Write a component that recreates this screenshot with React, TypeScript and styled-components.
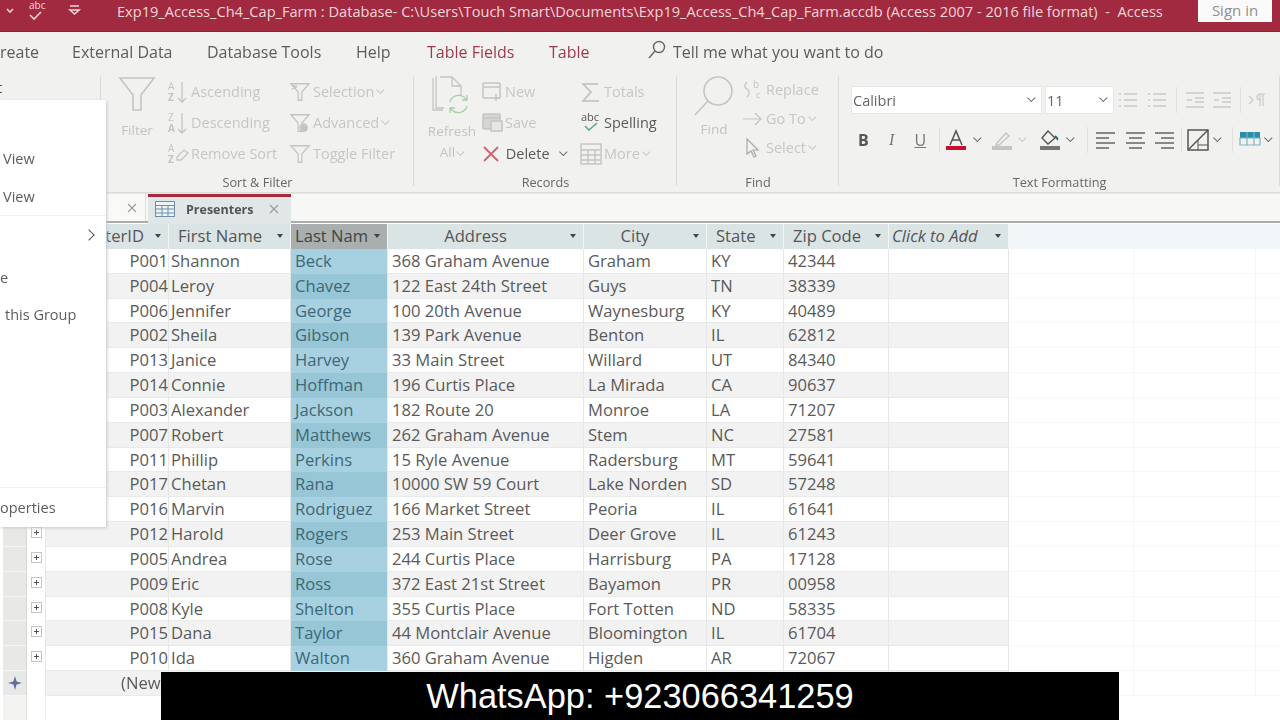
import React from "react";
import styled, { createGlobalStyle } from "styled-components";

const Global = createGlobalStyle`
  html, body { margin: 0; padding: 0; background: #fff; overflow: hidden; }
  #root { width: 1280px; height: 720px; }
`;

const Page = styled.div`
  position: relative;
  width: 1280px;
  height: 720px;
  overflow: hidden;
  display: flex;
  flex-direction: column;
  font-family: "Open Sans", "Noto Sans", sans-serif;
  color: #555;
`;
const Soft = styled.div`
  display: flex;
  flex-direction: column;
  flex: 1;
  min-height: 0;
  filter: blur(0.45px);
`;

/* ---------- title bar ---------- */
const TitleBar = styled.header`
  height: 31px;
  background: #a12a40;
  border-bottom: 1px solid #8b2236;
  display: flex;
  align-items: flex-start;
  flex: none;
`;
const Qat = styled.div`
  width: 117px;
  height: 22px;
  flex: none;
  display: flex;
  align-items: center;
  padding-left: 5px;
  box-sizing: border-box;
`;
const Title = styled.div`
  flex: 1;
  font-size: 14.6px;
  line-height: 23px;
  color: #f0d6d9;
  white-space: pre;
  overflow: hidden;
`;
const SignIn = styled.div`
  width: 74px;
  height: 22px;
  margin-right: 8px;
  background: #fbfafa;
  color: #8f8f91;
  font-size: 15px;
  line-height: 21px;
  text-align: center;
  flex: none;
`;

/* ---------- ribbon tabs ---------- */
const TabRow = styled.nav`
  height: 40px;
  background: #f1f2ef;
  flex: none;
  position: relative;
  display: flex;
  align-items: center;
  font-size: 16px;
  color: #5c5c5c;
  overflow: hidden;
`;
const TabLabel = styled.span<{ $w: number; $red?: boolean }>`
  width: ${(p) => p.$w}px;
  flex: none;
  white-space: nowrap;
  color: ${(p) => (p.$red ? "#9c3a4c" : "inherit")};
`;
const CutTab = styled.span`
  width: 72px;
  flex: none;
  white-space: nowrap;
`;

/* ---------- ribbon ---------- */
const Ribbon = styled.section`
  height: 120px;
  flex: none;
  background: #f1f2ef;
  border-bottom: 1px solid #dcdcda;
  box-shadow: 0 1px 2px #d9d9d7;
  display: flex;
  box-sizing: content-box;
`;
const Group = styled.div<{ $w: number }>`
  width: ${(p) => p.$w}px;
  flex: none;
  box-sizing: border-box;
  position: relative;
  display: flex;
  flex-direction: column;
  &::after {
    content: "";
    position: absolute;
    right: 0;
    top: 4px;
    bottom: 6px;
    width: 1px;
    background: #dbdbd9;
  }
`;
const GroupBody = styled.div<{ $pad: number }>`
  flex: 1;
  display: flex;
  padding: 3px 0 0 ${(p) => p.$pad}px;
  min-height: 0;
`;
const GroupLabel = styled.div`
  height: 19px;
  line-height: 18px;
  font-size: 12.7px;
  color: #666;
  text-align: center;
  flex: none;
`;
const BigCol = styled.div<{ $w: number; $labelGap?: number }>`
  width: ${(p) => p.$w}px;
  flex: none;
  display: flex;
  flex-direction: column;
  align-items: center;
  font-size: 13.5px;
  line-height: 21px;
  color: #c3c4c2;
  svg {
    margin-bottom: ${(p) => p.$labelGap ?? 0}px;
    flex: none;
  }
`;
const SmallCol = styled.div<{ $w: number; $row?: number; $top?: number; $left?: number }>`
  width: ${(p) => p.$w}px;
  flex: none;
  display: flex;
  flex-direction: column;
  box-sizing: border-box;
  padding-top: ${(p) => p.$top ?? 0}px;
  padding-left: ${(p) => p.$left ?? 0}px;
  & > * {
    height: ${(p) => p.$row ?? 31}px;
    flex: none;
  }
`;
const Cmd = styled.div<{ $on?: boolean }>`
  display: flex;
  align-items: center;
  gap: 1px;
  font-size: 14.5px;
  white-space: nowrap;
  color: ${(p) => (p.$on ? "#5a5a5a" : "#c6c7c5")};
  svg {
    flex: none;
    margin-right: 1px;
  }
`;
const Leftover = styled.div`
  font-size: 15px;
  color: #555;
  padding: 2px 0 0 0;
  margin-left: -3px;
`;
const Down = styled.span<{ $on?: boolean }>`
  display: inline-block;
  flex: none;
  margin-left: 3px;
  width: 5px;
  height: 5px;
  border-right: 1.3px solid ${(p) => (p.$on ? "#666" : "#c6c7c5")};
  border-bottom: 1.3px solid ${(p) => (p.$on ? "#666" : "#c6c7c5")};
  transform: rotate(45deg) translate(-2px, -1px);
`;

/* text formatting */
const FormatBody = styled.div`
  flex: 1;
  display: flex;
  flex-direction: column;
  padding: 14px 0 0 12px;
  gap: 12px;
  min-height: 0;
`;
const FormatRow = styled.div<{ $left?: number }>`
  display: flex;
  align-items: center;
  height: 28px;
  margin-left: ${(p) => p.$left ?? 0}px;
`;
const Select = styled.div<{ $w: number }>`
  width: ${(p) => p.$w}px;
  height: 28px;
  background: #fff;
  border: 1px solid #e7e7e5;
  box-sizing: border-box;
  display: flex;
  align-items: center;
  justify-content: space-between;
  font-size: 14.5px;
  color: #666;
  padding: 0 6px 0 1px;
  margin-right: 3px;
  flex: none;
`;
const VSep = styled.span<{ $l: number; $r: number }>`
  width: 1px;
  height: 26px;
  background: #e0e0de;
  flex: none;
  margin: 0 ${(p) => p.$r}px 0 ${(p) => p.$l}px;
`;
const Space = styled.span<{ $w: number }>`
  width: ${(p) => p.$w}px;
  flex: none;
`;

/* ---------- document tabs ---------- */
const DocStrip = styled.div`
  height: 29px;
  margin-top: 1px;
  flex: none;
  background: #f7f7f6;
  border-bottom: 2px solid #a9abab;
  display: flex;
  box-sizing: border-box;
  position: relative;
`;
const PrevTab = styled.div`
  width: 146px;
  height: 27px;
  background: #f9f9f8;
  border-right: 1px solid #dedede;
  display: flex;
  align-items: center;
  justify-content: flex-end;
  box-sizing: border-box;
  padding-right: 8px;
  margin-right: 2px;
`;
const ActiveTab = styled.div`
  width: 143px;
  height: 30px;
  margin-bottom: -3px;
  background: #e1e7e7;
  border-top: 3px solid #a6293e;
  box-sizing: border-box;
  display: flex;
  align-items: center;
  padding: 0 0 3px 7px;
  font-size: 12.5px;
  font-weight: 700;
  color: #4f5556;
  position: relative;
`;
const TabName = styled.span`
  margin-left: 11px;
  width: 83px;
`;

/* ---------- datasheet ---------- */
const COLS = "3px 24px 19px 123px 122px 97px 196px 123px 77px 105px 120px 1fr";
const Sheet = styled.main`
  flex: 1;
  min-height: 0;
  background: #fff;
  margin-top: 1px;
  font-size: 16.6px;
  color: #5a5a5a;
`;
const HeadRow = styled.div`
  display: grid;
  grid-template-columns: ${COLS};
  height: 25px;
  background: #f1f6f8;
`;
const Head = styled.div<{ $sel?: boolean; $center?: boolean; $italic?: boolean }>`
  background: ${(p) => (p.$sel ? "#a9afae" : "#dbe4e5")};
  border-right: 1px solid #f3f5f5;
  box-sizing: border-box;
  display: flex;
  align-items: center;
  position: relative;
  padding: 0 ${(p) => (p.$center ? 20 : 0)}px 2px ${(p) => (p.$center ? 0 : p.$sel ? 4 : 9)}px;
  justify-content: ${(p) => (p.$center ? "center" : "flex-start")};
  font-style: ${(p) => (p.$italic ? "italic" : "normal")};
  white-space: nowrap;
  overflow: hidden;
  color: ${(p) => (p.$sel ? "#444" : "#555")};
  &::after {
    content: "";
    position: absolute;
    right: 7px;
    top: 10px;
    border-left: 3px solid transparent;
    border-right: 3px solid transparent;
    border-top: 4px solid #444;
  }
`;
const PlainHead = styled.div<{ $tone?: string }>`
  background: ${(p) => p.$tone ?? "#dbe4e5"};
`;
const CutHead = styled(Head)`
  justify-content: flex-end;
  padding: 0 24px 2px 0;
`;
const ClickHead = styled(Head)`
  padding-left: 3px;
`;
const Row = styled.div<{ $odd: boolean }>`
  display: grid;
  grid-template-columns: ${COLS};
  height: 24.83px;
  background: ${(p) => (p.$odd ? "#f2f2f2" : "#fff")};
  box-shadow: inset 0 -1px 0 #e9ebeb;
`;
const Gutter = styled.div`
  background: #fff;
`;
const Selector = styled.div`
  background: #e8e9e6;
  border-right: 1px solid #d8d8d6;
  border-bottom: 1px solid #f6f6f5;
  display: flex;
  align-items: center;
  justify-content: center;
`;
const ExpandCell = styled.div`
  border-right: 1px solid #e6e8e8;
  display: flex;
  align-items: flex-start;
  justify-content: center;
  padding-top: 5px;
  background: #fff;
`;
const PlusBox = styled.span`
  width: 11px;
  height: 11px;
  box-sizing: border-box;
  border: 1px solid #c5c7c7;
  background: #fff;
  position: relative;
  &::before,
  &::after {
    content: "";
    position: absolute;
    background: #555;
  }
  &::before {
    left: 2px;
    right: 2px;
    top: 4px;
    height: 1px;
  }
  &::after {
    top: 2px;
    bottom: 2px;
    left: 4px;
    width: 1px;
  }
`;
const Cell = styled.div<{ $right?: boolean; $sel?: boolean; $odd?: boolean; $pad?: number }>`
  line-height: 24px;
  padding: 0 0 0 ${(p) => p.$pad ?? 4}px;
  text-align: ${(p) => (p.$right ? "right" : "left")};
  background: ${(p) => (p.$sel ? (p.$odd ? "#97c6d6" : "#a7d1e1") : "transparent")};
  color: ${(p) => (p.$sel ? "#3f6775" : "inherit")};
  border-right: 1px solid #e6e8e8;
  white-space: nowrap;
  box-sizing: border-box;
`;
const Blank = styled.div`
  background: linear-gradient(#f5f6f6, #f5f6f6) 124px 0 / 1px 100% no-repeat,
    linear-gradient(#f5f6f6, #f5f6f6) 246px 0 / 1px 100% no-repeat,
    linear-gradient(#f7f8f8, #f7f8f8) 0 100% / 100% 1px no-repeat, #fff;
`;
const NewRowLabel = styled.div`
  line-height: 24px;
  white-space: nowrap;
  padding-left: 75px;
  border-right: 1px solid #e6e8e8;
`;
const Tail = styled.div`
  display: grid;
  grid-template-columns: ${COLS};
  height: 30px;
`;
const TailSel = styled.div`
  background: #f3f3f2;
  border-right: 1px solid #e2e2e0;
`;
const TailExp = styled.div`
  border-right: 1px solid #ececec;
`;

/* ---------- overlays ---------- */
const Menu = styled.aside`
  position: absolute;
  left: 0;
  top: 100px;
  width: 106px;
  height: 427px;
  background: #fff;
  box-shadow: 1px 1px 3px #c9c9c9;
  font-size: 14.5px;
  color: #5c5c5c;
  padding-top: 47px;
  box-sizing: border-box;
  filter: blur(0.4px);
  overflow: hidden;
`;
const MenuItem = styled.div<{ $h: number; $x?: number }>`
  height: ${(p) => p.$h}px;
  line-height: 24px;
  padding-left: ${(p) => p.$x ?? 3}px;
  white-space: nowrap;
  display: flex;
`;
const MenuSep = styled.div<{ $after: number }>`
  height: 1px;
  background: #f1f1f1;
  margin-bottom: ${(p) => p.$after}px;
`;
const Chev = styled.span`
  margin-left: 82px;
  margin-top: 7px;
  width: 7px;
  height: 7px;
  border-top: 1.5px solid #555;
  border-right: 1.5px solid #555;
  transform: rotate(45deg);
`;
const Banner = styled.div`
  position: absolute;
  left: 161px;
  top: 672px;
  width: 958px;
  height: 48px;
  background: #000;
  color: #fff;
  font-family: "Liberation Sans", Arial, sans-serif;
  font-size: 34.4px;
  line-height: 48px;
  text-align: center;
  white-space: nowrap;
`;

/* ---------- icons ---------- */
const G = "#c4c5c3";
const Funnel = () => (
  <svg width="38" height="38" viewBox="0 0 38 38" fill="none" stroke={G} strokeWidth="1.6">
    <path d="M2 3h34L23 20v15h-8V20z" />
  </svg>
);
const SortIcon = ({ top, bot }: { top: string; bot: string }) => (
  <svg width="22" height="24" viewBox="0 0 22 24" fill="none" stroke={G}>
    <text x="1" y="10" fontSize="10" fontFamily="Open Sans" fill={G} stroke="none">{top}</text>
    <text x="1" y="21" fontSize="10" fontFamily="Open Sans" fontWeight="700" fill={G} stroke="none">{bot}</text>
    <path d="M15 2v20M11 18l4 4 4-4" strokeWidth="1.3" />
  </svg>
);
const RemoveSort = () => (
  <svg width="22" height="24" viewBox="0 0 22 24" fill="none" stroke={G}>
    <text x="1" y="10" fontSize="10" fill={G} stroke="none" fontFamily="Open Sans">A</text>
    <text x="1" y="21" fontSize="10" fill={G} stroke="none" fontFamily="Open Sans" fontWeight="700">Z</text>
    <path d="M10 15l7-7 4 3-7 7h-4z" strokeWidth="1.3" />
  </svg>
);
const SmallFunnel = ({ mark }: { mark?: "sel" | "adv" }) => (
  <svg width="22" height="22" viewBox="0 0 24 24" fill="none" stroke={G} strokeWidth="1.4">
    <path d="M2 3h20l-8 9v9h-4v-9z" />
    {mark === "sel" && <path d="M3 5l6 1M3 9l5-2" />}
    {mark === "adv" && <circle cx="16" cy="17" r="4" fill={G} />}
  </svg>
);
const Refresh = () => (
  <svg width="48" height="44" viewBox="0 0 48 44" fill="none" stroke={G} strokeWidth="1.3">
    <path d="M8 1v32h8M12 2h12l9 9v10M24 2v9h9" />
    <path d="M5 3v32h10" />
    <path d="M22 27a9 9 0 0 1 15-4l2 2M39 20v5h-5" stroke="#a6cfa6" />
    <path d="M39 31a9 9 0 0 1-15 4l-2-2M22 38v-5h5" stroke="#a6cfa6" />
  </svg>
);
const RecIcon = ({ save }: { save?: boolean }) => (
  <svg width="21" height="21" viewBox="0 0 21 21" fill={save ? "#d6d7d5" : "none"} stroke={G} strokeWidth="1.5">
    <rect x="1" y="2" width="17" height="15" rx="1" />
    <path d="M1 6h17" />
    {save ? <rect x="9" y="9" width="11" height="10" fill="#e7e7e5" /> : <path d="M14 13v7M11 17h7" />}
  </svg>
);
const Sigma = () => (
  <svg width="22" height="22" viewBox="0 0 22 22" fill="none" stroke="#bdbebc" strokeWidth="1.5">
    <path d="M18 3H3l8 8-8 9h16" />
  </svg>
);
const Abc = () => (
  <svg width="22" height="24" viewBox="0 0 22 24" fill="none">
    <text x="1" y="10" fontSize="11" fontFamily="Open Sans" fill="#555">abc</text>
    <path d="M5 15l4 4 8-7" stroke="#5aa58c" strokeWidth="1.6" />
  </svg>
);
const RedX = () => (
  <svg width="18" height="18" viewBox="0 0 18 18" fill="none" stroke="#d4606e" strokeWidth="1.8">
    <path d="M2 2l14 14M16 2L2 16" />
  </svg>
);
const MoreGrid = () => (
  <svg width="22" height="22" viewBox="0 0 22 22" fill="none" stroke={G} strokeWidth="1.4">
    <rect x="1" y="1" width="20" height="20" />
    <path d="M1 7h20M1 12h20M1 17h20M8 7v14M15 7v14" />
  </svg>
);
const Magnifier = () => (
  <svg width="42" height="42" viewBox="0 0 42 42" fill="none" stroke={G} strokeWidth="1.6">
    <circle cx="25" cy="16" r="14" />
    <path d="M15 26L2 40" />
  </svg>
);
const ReplaceIcon = () => (
  <svg width="22" height="22" viewBox="0 0 22 22" fill="none" stroke={G} strokeWidth="1.2">
    <text x="11" y="9" fontSize="10" fontFamily="Open Sans" fill={G} stroke="none">b</text>
    <text x="14" y="19" fontSize="9" fontFamily="Open Sans" fill={G} stroke="none">c</text>
    <path d="M5 3c-3 3-3 5 0 7s3 5 0 8" />
  </svg>
);
const ArrowIcon = () => (
  <svg width="22" height="22" viewBox="0 0 22 22" fill="none" stroke={G} strokeWidth="1.2">
    <path d="M1 11h18M13 5l6 6-6 6" />
  </svg>
);
const CursorIcon = () => (
  <svg width="22" height="22" viewBox="0 0 22 22" fill="none" stroke="#a9aaa8" strokeWidth="1.2">
    <path d="M5 2v15l4-3 3 6 2-1-3-6h5z" />
  </svg>
);
const ListIcon = ({ inset }: { inset?: boolean }) => (
  <svg width="22" height="20" viewBox="0 0 22 20" fill="none" stroke="#c9cac8" strokeWidth="1.3">
    {inset ? (
      <path d="M2 3h18M11 8h9M11 12h9M2 17h18M3 10h5" />
    ) : (
      <path d="M7 4h13M7 10h13M7 16h13M2 4h2M2 10h2M2 16h2" />
    )}
  </svg>
);
const Pilcrow = () => (
  <svg width="22" height="20" viewBox="0 0 22 20" fill="none" stroke="#c9cac8" strokeWidth="1.2">
    <path d="M2 6l4 4-4 4M13 16V4h5M16 4v12M13 4a3 3 0 0 0 0 6" />
  </svg>
);
const FmtLetter = styled.span<{ $i?: boolean; $b?: boolean; $u?: boolean }>`
  width: 28.5px;
  flex: none;
  text-align: center;
  font-size: 16px;
  color: ${(p) => (p.$b ? "#555" : "#777")};
  font-weight: ${(p) => (p.$b ? 700 : 400)};
  font-style: ${(p) => (p.$i ? "italic" : "normal")};
  font-family: ${(p) => (p.$i ? '"Liberation Serif", serif' : "inherit")};
  text-decoration: ${(p) => (p.$u ? "underline" : "none")};
`;
const FontColor = () => (
  <svg width="24" height="24" viewBox="0 0 24 24" fill="none" stroke="#555" strokeWidth="1.5">
    <path d="M6 17L12 3l6 14M8 12h8" />
    <rect x="2" y="18" width="20" height="4" fill="#c8102e" stroke="none" />
  </svg>
);
const Highlighter = () => (
  <svg width="24" height="24" viewBox="0 0 24 24" fill="none" stroke="#c4c5c3" strokeWidth="1.4">
    <path d="M7 15l9-10 3 3-10 9H6z" />
    <rect x="2" y="18" width="20" height="4" fill="#c4c5c3" stroke="none" />
  </svg>
);
const Bucket = () => (
  <svg width="24" height="24" viewBox="0 0 24 24" fill="none" stroke="#555" strokeWidth="1.4">
    <path d="M10 3l-6 7 6 6 7-6z" />
    <path d="M17 8c2 2 3 3 2 4" stroke="#1f6f7a" strokeWidth="2" />
    <rect x="2" y="18" width="20" height="4" fill="#777" stroke="none" />
  </svg>
);
const Align = ({ k }: { k: "l" | "c" | "r" }) => {
  const d = {
    l: "M1 3h19M1 8h13M1 13h19M1 18h13",
    c: "M1 3h19M4 8h13M1 13h19M4 18h13",
    r: "M1 3h19M7 8h13M1 13h19M7 18h13",
  }[k];
  return (
    <svg width="21" height="21" viewBox="0 0 21 21" fill="none" stroke="#666" strokeWidth="1.6">
      <path d={d} />
    </svg>
  );
};
const Gridline = () => (
  <svg width="22" height="22" viewBox="0 0 22 22" fill="none" stroke="#555" strokeWidth="1.5">
    <rect x="1" y="1" width="20" height="20" />
    <path d="M1 21L21 1" />
    <path d="M11 11v10M11 16h10" strokeWidth="1" />
  </svg>
);
const TableColor = () => (
  <svg width="22" height="18" viewBox="0 0 22 18">
    <rect x="1" y="1" width="20" height="6" fill="#2a8fa8" />
    <path d="M1 7h20v7H1z M8 1v13M15 1v13" fill="none" stroke="#7fb5c2" strokeWidth="1.2" />
  </svg>
);
const TableTab = () => (
  <svg width="20" height="16" viewBox="0 0 20 16" fill="#eef3f6" stroke="#6f8fa8" strokeWidth="1">
    <rect x="0.5" y="0.5" width="19" height="15" />
    <path d="M0.5 4.5h19M0.5 8h19M0.5 12h19M7 4.5v11M13 4.5v11" />
  </svg>
);
const Cross = ({ c = "#9a9c9c" }: { c?: string }) => (
  <svg width="10" height="10" viewBox="0 0 10 10" fill="none" stroke={c} strokeWidth="1.1">
    <path d="M1 1l8 8M9 1L1 9" />
  </svg>
);
const Search = () => (
  <svg width="20" height="20" viewBox="0 0 20 20" fill="none" stroke="#666" strokeWidth="1.4">
    <circle cx="12" cy="7" r="5.5" />
    <path d="M8 11l-6 7" />
  </svg>
);
const QatIcons = () => (
  <svg width="85" height="22" viewBox="0 0 85 22" fill="none" stroke="#f1d5d9" strokeWidth="1.6">
    <path d="M2 9l3 3 3-3" />
    <text x="24" y="9" fontSize="10" fontFamily="Open Sans" fill="#f1d5d9" stroke="none">abc</text>
    <path d="M25 15l4 4 7-7" />
    <path d="M65 6h9M65 10l4.5 4 4.5-4z" />
  </svg>
);
const NewStar = () => (
  <svg width="14" height="14" viewBox="0 0 14 14" fill="#5f6f9c">
    <path d="M7 0l1.6 5.4L14 7l-5.4 1.6L7 14 5.4 8.6 0 7l5.4-1.6z" />
  </svg>
);

/* ---------- data ---------- */
const rows = [
  ["P001", "Shannon", "Beck", "368 Graham Avenue", "Graham", "KY", "42344"],
  ["P004", "Leroy", "Chavez", "122 East 24th Street", "Guys", "TN", "38339"],
  ["P006", "Jennifer", "George", "100 20th Avenue", "Waynesburg", "KY", "40489"],
  ["P002", "Sheila", "Gibson", "139 Park Avenue", "Benton", "IL", "62812"],
  ["P013", "Janice", "Harvey", "33 Main Street", "Willard", "UT", "84340"],
  ["P014", "Connie", "Hoffman", "196 Curtis Place", "La Mirada", "CA", "90637"],
  ["P003", "Alexander", "Jackson", "182 Route 20", "Monroe", "LA", "71207"],
  ["P007", "Robert", "Matthews", "262 Graham Avenue", "Stem", "NC", "27581"],
  ["P011", "Phillip", "Perkins", "15 Ryle Avenue", "Radersburg", "MT", "59641"],
  ["P017", "Chetan", "Rana", "10000 SW 59 Court", "Lake Norden", "SD", "57248"],
  ["P016", "Marvin", "Rodriguez", "166 Market Street", "Peoria", "IL", "61641"],
  ["P012", "Harold", "Rogers", "253 Main Street", "Deer Grove", "IL", "61243"],
  ["P005", "Andrea", "Rose", "244 Curtis Place", "Harrisburg", "PA", "17128"],
  ["P009", "Eric", "Ross", "372 East 21st Street", "Bayamon", "PR", "00958"],
  ["P008", "Kyle", "Shelton", "355 Curtis Place", "Fort Totten", "ND", "58335"],
  ["P015", "Dana", "Taylor", "44 Montclair Avenue", "Bloomington", "IL", "61704"],
  ["P010", "Ida", "Walton", "360 Graham Avenue", "Higden", "AR", "72067"],
];

export default function App() {
  return (
    <Page>
      <Global />
      <Soft>
        <TitleBar>
          <Qat>
            <QatIcons />
          </Qat>
          <Title>
            {"Exp19_Access_Ch4_Cap_Farm : Database- C:\\Users\\Touch Smart\\Documents\\Exp19_Access_Ch4_Cap_Farm.accdb (Access 2007 - 2016 file format)  -  Access"}
          </Title>
          <SignIn>Sign in</SignIn>
        </TitleBar>

        <TabRow>
          <CutTab>reate</CutTab>
          <TabLabel $w={135}>External Data</TabLabel>
          <TabLabel $w={149}>Database Tools</TabLabel>
          <TabLabel $w={71}>Help</TabLabel>
          <TabLabel $w={122} $red>Table Fields</TabLabel>
          <TabLabel $w={98} $red>Table</TabLabel>
          <TabLabel $w={26}><Search /></TabLabel>
          <TabLabel $w={300}>Tell me what you want to do</TabLabel>
        </TabRow>

        <Ribbon>
          <Group $w={101}>
            <GroupBody $pad={0}>
              <Leftover>t</Leftover>
            </GroupBody>
          </Group>
          <Group $w={313}>
            <GroupBody $pad={16}>
              <BigCol $w={40} $labelGap={7}>
                <Funnel />
                Filter
              </BigCol>
              <SmallCol $w={132} $left={10} $top={1}>
                <Cmd><SortIcon top="A" bot="Z" />Ascending</Cmd>
                <Cmd><SortIcon top="Z" bot="A" />Descending</Cmd>
                <Cmd><RemoveSort />Remove Sort</Cmd>
              </SmallCol>
              <SmallCol $w={120} $top={1}>
                <Cmd><SmallFunnel mark="sel" />Selection<Down /></Cmd>
                <Cmd><SmallFunnel mark="adv" />Advanced<Down /></Cmd>
                <Cmd><SmallFunnel />Toggle Filter</Cmd>
              </SmallCol>
            </GroupBody>
            <GroupLabel>Sort &amp; Filter</GroupLabel>
          </Group>
          <Group $w={263}>
            <GroupBody $pad={13}>
              <BigCol $w={50} $labelGap={2}>
                <Refresh />
                <span>Refresh</span>
                <span>All<Down /></span>
              </BigCol>
              <SmallCol $w={103} $left={5} $top={1}>
                <Cmd><RecIcon />New</Cmd>
                <Cmd><RecIcon save />Save</Cmd>
                <Cmd $on><RedX />&nbsp;Delete&nbsp;&nbsp;<Down $on /></Cmd>
              </SmallCol>
              <SmallCol $w={90} $top={1}>
                <Cmd><Sigma />Totals</Cmd>
                <Cmd $on><Abc />Spelling</Cmd>
                <Cmd><MoreGrid />More<Down /></Cmd>
              </SmallCol>
            </GroupBody>
            <GroupLabel>Records</GroupLabel>
          </Group>
          <Group $w={162}>
            <GroupBody $pad={17}>
              <BigCol $w={40} $labelGap={2}>
                <Magnifier />
                <span>Find</span>
              </BigCol>
              <SmallCol $w={100} $left={8} $row={29}>
                <Cmd><ReplaceIcon />Replace</Cmd>
                <Cmd><ArrowIcon />Go To<Down /></Cmd>
                <Cmd><CursorIcon />Select<Down /></Cmd>
              </SmallCol>
            </GroupBody>
            <GroupLabel>Find</GroupLabel>
          </Group>
          <Group $w={441}>
            <FormatBody>
              <FormatRow>
                <Select $w={191}>Calibri<Down $on /></Select>
                <Select $w={69}>11<Down $on /></Select>
                <ListIcon />
                <Space $w={7} />
                <ListIcon />
                <VSep $l={7.5} $r={7} />
                <ListIcon inset />
                <Space $w={5} />
                <ListIcon inset />
                <VSep $l={7} $r={6} />
                <Pilcrow />
              </FormatRow>
              <FormatRow $left={-2}>
                <FmtLetter $b>B</FmtLetter>
                <FmtLetter $i>I</FmtLetter>
                <FmtLetter $u>U</FmtLetter>
                <VSep $l={4} $r={4} />
                <FontColor />
                <Space $w={4} />
                <Down $on />
                <Space $w={9.5} />
                <Highlighter />
                <Space $w={3} />
                <Down />
                <Space $w={12} />
                <Bucket />
                <Space $w={2.5} />
                <Down $on />
                <VSep $l={13.5} $r={7} />
                <Align k="l" />
                <Space $w={9} />
                <Align k="c" />
                <Space $w={8} />
                <Align k="r" />
                <VSep $l={5.5} $r={5.5} />
                <Gridline />
                <Space $w={3} />
                <Down $on />
                <VSep $l={11} $r={6} />
                <TableColor />
                <Space $w={2} />
                <Down $on />
              </FormatRow>
            </FormatBody>
            <GroupLabel>Text Formatting</GroupLabel>
          </Group>
        </Ribbon>

        <DocStrip>
          <PrevTab><Cross /></PrevTab>
          <ActiveTab>
            <TableTab />
            <TabName>Presenters</TabName>
            <Cross c="#9a9c9c" />
          </ActiveTab>
        </DocStrip>

        <Sheet>
          <HeadRow>
            <PlainHead $tone="#fff" />
            <PlainHead />
            <PlainHead />
            <CutHead>PresenterID</CutHead>
            <Head>First Name</Head>
            <Head $sel>Last Nam</Head>
            <Head $center>Address</Head>
            <Head $center>City</Head>
            <Head>State</Head>
            <Head>Zip Code</Head>
            <ClickHead $italic>Click to Add</ClickHead>
          </HeadRow>
          {rows.map((r, i) => (
            <Row key={r[0]} $odd={i % 2 === 1}>
              <Gutter />
              <Selector />
              <ExpandCell><PlusBox /></ExpandCell>
              <Cell $right>{r[0]}</Cell>
              <Cell $pad={2}>{r[1]}</Cell>
              <Cell $sel $odd={i % 2 === 1}>{r[2]}</Cell>
              <Cell>{r[3]}</Cell>
              <Cell>{r[4]}</Cell>
              <Cell>{r[5]}</Cell>
              <Cell>{r[6]}</Cell>
              <Cell />
              <Blank />
            </Row>
          ))}
          <Row $odd>
            <Gutter />
            <Selector><NewStar /></Selector>
            <ExpandCell />
            <NewRowLabel>(New)</NewRowLabel>
            <Cell />
            <Cell />
            <Cell />
            <Cell />
            <Cell />
            <Cell />
            <Cell />
            <Blank />
          </Row>
          <Tail>
            <Gutter />
            <TailSel />
            <TailExp />
          </Tail>
        </Sheet>
      </Soft>

      <Menu>
        <MenuItem $h={24}>View</MenuItem>
        <MenuItem $h={14} />
        <MenuItem $h={24}>View</MenuItem>
        <MenuItem $h={6} />
        <MenuSep $after={8} />
        <MenuItem $h={24}><Chev /></MenuItem>
        <MenuItem $h={18} />
        <MenuItem $h={24} $x={0}>e</MenuItem>
        <MenuItem $h={13} />
        <MenuItem $h={24} $x={5}>this Group</MenuItem>
        <MenuItem $h={160} />
        <MenuSep $after={8} />
        <MenuItem $h={24} $x={0}>operties</MenuItem>
      </Menu>

      <Banner>WhatsApp: +923066341259</Banner>
    </Page>
  );
}
